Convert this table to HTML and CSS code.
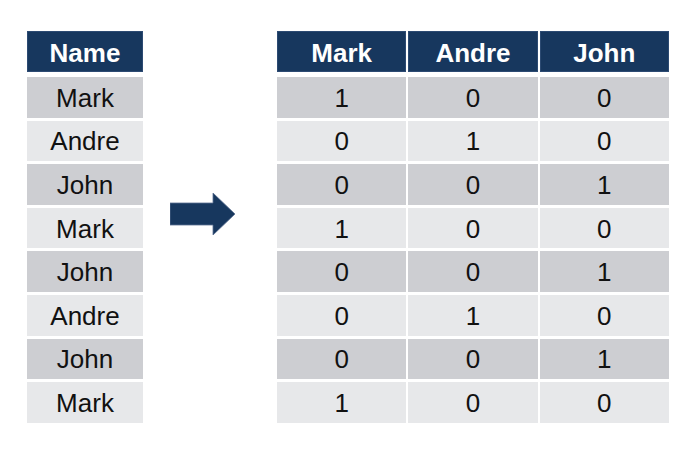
FILE: index.html
```html
<!DOCTYPE html>
<html>
<head>
<meta charset="utf-8">
<link rel="stylesheet" href="styles.css">
</head>
<body>
<div class="page">
  <div class="table names">
    <div class="head">Name</div>
    <div class="row odd">Mark</div>
    <div class="row even">Andre</div>
    <div class="row odd">John</div>
    <div class="row even">Mark</div>
    <div class="row odd">John</div>
    <div class="row even">Andre</div>
    <div class="row odd">John</div>
    <div class="row even">Mark</div>
  </div>
  <svg class="arrow" width="65" height="42" viewBox="0 0 65 42">
    <path d="M0 10 H43 V0 L65 21 L43 42 V32 H0 Z" fill="#17375e" stroke="#5a7092" stroke-width="0.8"/>
  </svg>
  <div class="table onehot">
    <div class="head">Mark</div><div class="head">Andre</div><div class="head">John</div>
    <div class="row odd">1</div><div class="row odd">0</div><div class="row odd">0</div>
    <div class="row even">0</div><div class="row even">1</div><div class="row even">0</div>
    <div class="row odd">0</div><div class="row odd">0</div><div class="row odd">1</div>
    <div class="row even">1</div><div class="row even">0</div><div class="row even">0</div>
    <div class="row odd">0</div><div class="row odd">0</div><div class="row odd">1</div>
    <div class="row even">0</div><div class="row even">1</div><div class="row even">0</div>
    <div class="row odd">0</div><div class="row odd">0</div><div class="row odd">1</div>
    <div class="row even">1</div><div class="row even">0</div><div class="row even">0</div>
  </div>
</div>
</body>
</html>
```

FILE: styles.css
```css
html, body {
  margin: 0;
  padding: 0;
  background: #ffffff;
}
.page {
  display: flex;
  align-items: flex-start;
  padding: 31px 0 0 27px;
  font-family: "Liberation Sans", Arial, sans-serif;
}
.table {
  display: grid;
  grid-template-rows: 43px repeat(8, 40.6px);
  row-gap: 3px;
}
.names {
  width: 116px;
  grid-template-columns: 1fr;
}
.onehot {
  width: 392px;
  margin-left: 42px;
  grid-template-columns: repeat(3, 1fr);
  column-gap: 2px;
}
.head {
  margin-bottom: 2px;
  background: #17375e;
  color: #ffffff;
  font-weight: bold;
  font-size: 26px;
  padding-top: 4px;
  display: flex;
  align-items: center;
  justify-content: center;
  box-shadow: inset 0 0 0 1px #2c4a72;
}
.row {
  color: #111111;
  font-size: 26px;
  padding-top: 2px;
  display: flex;
  align-items: center;
  justify-content: center;
}
.odd { background: #cdced2; }
.even { background: #e7e8ea; }
.arrow {
  display: block;
  margin-left: 27px;
  margin-top: 162px;
}
```
